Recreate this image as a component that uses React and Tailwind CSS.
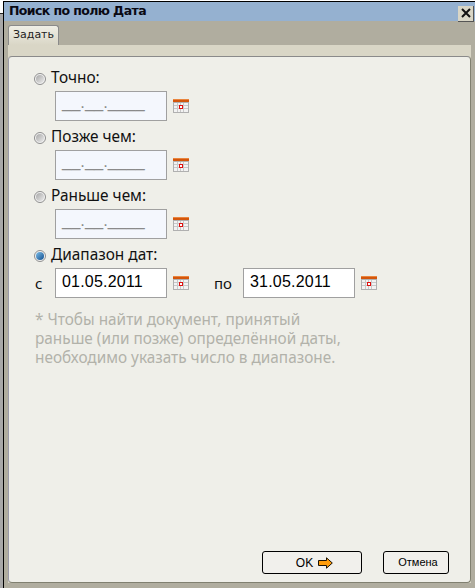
function CalendarIcon() {
  return (
    <svg width="16" height="14" viewBox="0 0 16 14" className="shrink-0">
      <rect x="0" y="0" width="16" height="14" fill="#b0b0b0" />
      <rect x="0" y="0" width="16" height="3" fill="#d4560c" />
      <rect x="0" y="0" width="16" height="1" fill="#e9853e" />
      <rect x="1" y="4" width="14" height="9" fill="#f2f2f2" />
      <path d="M4.5 4v9M7.5 4v9M10.5 4v9M1 6.5h14M1 9.5h14" stroke="#c8c8c8" strokeWidth="1" />
      <rect x="6.5" y="6.5" width="3" height="3" fill="#fff" stroke="#e01010" strokeWidth="1" />
    </svg>
  );
}

function Radio({ checked }) {
  return (
    <span className="flex h-[12px] w-[12px] shrink-0 items-center justify-center rounded-full border border-[#8f8f8f] bg-[#f2f2f2]">
      <span
        className={
          checked
            ? "h-[8px] w-[8px] rounded-full bg-gradient-to-br from-[#7fc0ea] to-[#0b4f8e]"
            : "h-[8px] w-[8px] rounded-full bg-gradient-to-br from-[#a8a8a8] to-[#ececec]"
        }
      />
    </span>
  );
}

function DateInput({ value }) {
  return (
    <div className={`flex h-[30px] w-[112px] items-center border border-[#a0a0a0] pl-[6px] text-[16px] text-black ${value ? "bg-white" : "bg-[#f4f7fd]"}`}>
      {value ? (
        <span className="-mt-[2px] font-['Liberation_Sans',sans-serif] leading-none tracking-[0.2px]">{value}</span>
      ) : (
        <span className="-mt-[8px] font-['Liberation_Sans',sans-serif] text-[16.5px] leading-none text-[#8a8a8a]">__.__.____</span>
      )}
    </div>
  );
}

function RadioLabel({ checked, children }) {
  return (
    <div className="flex h-[18px] items-center gap-[5px] pl-[25px] text-[15.4px] text-[#111]">
      <Radio checked={checked} />
      <span className="-mt-[2px]">{children}</span>
    </div>
  );
}

function DateOption({ label }) {
  return (
    <div className="h-[59px]">
      <RadioLabel>{label}</RadioLabel>
      <div className="mt-[3px] flex items-center gap-[6px] pl-[46px]">
        <DateInput />
        <CalendarIcon />
      </div>
    </div>
  );
}

function OkArrow() {
  return (
    <svg width="15" height="12" viewBox="0 0 15 12" className="shrink-0">
      <path d="M0.5 3.5H8.5V0.8L14.3 6L8.5 11.2V8.5H0.5Z" fill="#ff9c0a" stroke="#1a1206" strokeWidth="1" />
    </svg>
  );
}

export default function App() {
  return (
    <div className="flex h-[588px] w-[475px] overflow-hidden bg-white font-['Noto_Sans',sans-serif]">
      {/* window behind the dialog */}
      <div className="w-[3px] shrink-0 pt-[13px]">
        <div className="h-full border-t border-[#222] bg-[#a8a8a8]" />
      </div>
      <div className="flex-1 pt-[1px]">
        <div className="flex h-[587px] flex-col border-t border-l border-black bg-[#b0ad9f]">
          {/* Title */}
          <div className="flex h-[19px] items-center justify-between bg-[#95b1d0] pl-[5px] pr-[1px]">
            <span className="font-['DejaVu_Sans',sans-serif] text-[12.5px] font-bold tracking-[-0.6px] text-[#0a0a14]">Поиск по полю Дата</span>
            <span className="mt-[4px] flex h-[16px] w-[16px] items-center justify-center border-r border-b border-[#555] bg-[#d9d6c6]">
              <svg width="10" height="10" viewBox="0 0 10 10">
                <path d="M1 1l8 8M9 1l-8 8" stroke="#111" strokeWidth="2" />
              </svg>
            </span>
          </div>

          {/* Tabs */}
          <div className="flex flex-1 flex-col pt-[4px] pr-[4px] pb-[5px] pl-[4px]">
            <div className="flex h-[20px] w-[51px] items-center justify-center rounded-t-[3px] border border-b-0 border-[#8a8a8a] bg-gradient-to-b from-[#f0efe6] to-[#d9d6c6] font-['DejaVu_Sans',sans-serif] text-[11px] text-[#222]">
              Задать
            </div>
            <div className="flex flex-1 flex-col bg-[#d9d6c6] pt-[11px]">
              <div className="flex flex-1 flex-col rounded-[4px] border-t border-r border-b border-l border-t-[#8a8a8a] border-r-[#808070] border-b-[#808070] border-l-[#9a9aa8] bg-[#efefe9] pt-[13px]">
                <DateOption label="Точно:" />
                <DateOption label="Позже чем:" />
                <DateOption label="Раньше чем:" />
                <RadioLabel checked>Диапазон дат:</RadioLabel>
                <div className="mt-[3px] flex items-center text-[15px] text-[#111]">
                  <span className="w-[46px] pl-[26px]">с</span>
                  <DateInput value="01.05.2011" />
                  <span className="ml-[6px]"><CalendarIcon /></span>
                  <span className="ml-[25px] w-[29px]">по</span>
                  <DateInput value="31.05.2011" />
                  <span className="ml-[6px]"><CalendarIcon /></span>
                </div>
                <p className="mt-[12px] pl-[26px] text-[15.35px] leading-[19px] text-[#b2b2aa]">
                  * Чтобы найти документ, принятый
                  <br />
                  раньше (или позже) определённой даты,
                  <br />
                  необходимо указать число в диапазоне.
                </p>
                <div className="mt-auto mb-[8px] flex justify-end gap-[21px] pr-[21px] font-['Liberation_Sans',sans-serif]">
                  <button className="flex h-[23px] w-[100px] items-center justify-center gap-[5px] rounded-[3px] border border-black bg-[#f1f0ec] pl-[5px] text-[12px] text-black">
                    OK
                    <OkArrow />
                  </button>
                  <button className="flex h-[23px] w-[66px] items-center justify-center rounded-[3px] border border-black bg-[#f1f0ec] pl-[4px] text-[11px] text-black">
                    Отмена
                  </button>
                </div>
              </div>
            </div>
          </div>
        </div>
      </div>
    </div>
  );
}
